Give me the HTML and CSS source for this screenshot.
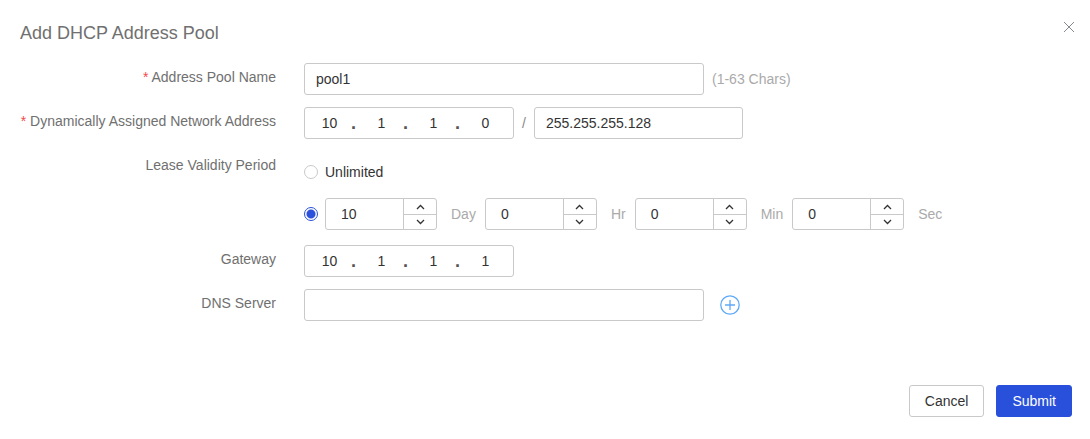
FILE: index.html
```html
<!DOCTYPE html>
<html lang="en">
<head>
    <meta charset="UTF-8">
    <meta name="viewport" content="width=device-width, initial-scale=1.0">
    <title>Add DHCP Address Pool</title>
    <link rel="stylesheet" href="styles.css">
</head>
<body>
    <form class="dialog">
        <div class="dialog-header">
            <h1>Add DHCP Address Pool</h1>
            <button type="button" class="close" aria-label="Close">
                <svg width="12" height="12" viewBox="0 0 12 12"><path d="M1 1l10 10M11 1L1 11"/></svg>
            </button>
        </div>

        <div class="row">
            <label class="row-label" for="pool-name"><span class="required">*</span> Address Pool Name</label>
            <div class="field">
                <input type="text" id="pool-name" class="text-input" value="pool1">
                <span class="hint">(1-63 Chars)</span>
            </div>
        </div>

        <div class="row">
            <label class="row-label" for="network-1"><span class="required">*</span> Dynamically Assigned Network Address</label>
            <div class="field">
                <div class="ip-input">
                    <input type="text" id="network-1" value="10"><span class="dot">.</span>
                    <input type="text" aria-label="Network octet 2" value="1"><span class="dot">.</span>
                    <input type="text" aria-label="Network octet 3" value="1"><span class="dot">.</span>
                    <input type="text" aria-label="Network octet 4" value="0">
                </div>
                <span class="slash">/</span>
                <input type="text" class="text-input mask" aria-label="Subnet mask" value="255.255.255.128">
            </div>
        </div>

        <div class="row lease">
            <span class="row-label" id="lease-label">Lease Validity Period</span>
            <div class="lease-options" role="radiogroup" aria-labelledby="lease-label">
                <div class="option">
                    <input type="radio" name="lease" id="lease-unlimited">
                    <label for="lease-unlimited">Unlimited</label>
                </div>
                <div class="option">
                    <input type="radio" name="lease" aria-label="Limited" checked>
                    <div class="stepper">
                        <input type="number" id="lease-day" value="10">
                        <button type="button" aria-label="More days"><svg width="9" height="6" viewBox="0 0 9 6"><path d="M1 5l3.5-3.5L8 5"/></svg></button>
                        <button type="button" aria-label="Fewer days"><svg width="9" height="6" viewBox="0 0 9 6"><path d="M1 1l3.5 3.5L8 1"/></svg></button>
                    </div>
                    <label class="unit" for="lease-day">Day</label>
                    <div class="stepper">
                        <input type="number" id="lease-hr" value="0">
                        <button type="button" aria-label="More hours"><svg width="9" height="6" viewBox="0 0 9 6"><path d="M1 5l3.5-3.5L8 5"/></svg></button>
                        <button type="button" aria-label="Fewer hours"><svg width="9" height="6" viewBox="0 0 9 6"><path d="M1 1l3.5 3.5L8 1"/></svg></button>
                    </div>
                    <label class="unit" for="lease-hr">Hr</label>
                    <div class="stepper">
                        <input type="number" id="lease-min" value="0">
                        <button type="button" aria-label="More minutes"><svg width="9" height="6" viewBox="0 0 9 6"><path d="M1 5l3.5-3.5L8 5"/></svg></button>
                        <button type="button" aria-label="Fewer minutes"><svg width="9" height="6" viewBox="0 0 9 6"><path d="M1 1l3.5 3.5L8 1"/></svg></button>
                    </div>
                    <label class="unit" for="lease-min">Min</label>
                    <div class="stepper">
                        <input type="number" id="lease-sec" value="0">
                        <button type="button" aria-label="More seconds"><svg width="9" height="6" viewBox="0 0 9 6"><path d="M1 5l3.5-3.5L8 5"/></svg></button>
                        <button type="button" aria-label="Fewer seconds"><svg width="9" height="6" viewBox="0 0 9 6"><path d="M1 1l3.5 3.5L8 1"/></svg></button>
                    </div>
                    <label class="unit" for="lease-sec">Sec</label>
                </div>
            </div>
        </div>

        <div class="row">
            <label class="row-label" for="gateway-1">Gateway</label>
            <div class="field">
                <div class="ip-input">
                    <input type="text" id="gateway-1" value="10"><span class="dot">.</span>
                    <input type="text" aria-label="Gateway octet 2" value="1"><span class="dot">.</span>
                    <input type="text" aria-label="Gateway octet 3" value="1"><span class="dot">.</span>
                    <input type="text" aria-label="Gateway octet 4" value="1">
                </div>
            </div>
        </div>

        <div class="row">
            <label class="row-label" for="dns">DNS Server</label>
            <div class="field">
                <input type="text" id="dns" class="text-input">
                <button type="button" class="add" aria-label="Add DNS server">
                    <svg width="20" height="20" viewBox="0 0 20 20"><circle cx="10" cy="10" r="9.2"/><path d="M10 5v10M5 10h10"/></svg>
                </button>
            </div>
        </div>

        <div class="dialog-footer">
            <button type="button" class="btn">Cancel</button>
            <button type="submit" class="btn primary">Submit</button>
        </div>
    </form>
</body>
</html>
```
FILE: styles.css
```css
* {
    box-sizing: border-box;
}
body {
    margin: 0;
    background-color: #fff;
    color: #333;
    font-family: Arial, "Liberation Sans", sans-serif;
    font-size: 14px;
}
input, button {
    margin: 0;
    padding: 0;
    font: inherit;
    color: inherit;
}
button {
    border: none;
    background: none;
    cursor: pointer;
}
svg {
    display: block;
    fill: none;
    stroke: currentColor;
}
.dialog {
    padding: 17px 18px 22px 20px;
}
.dialog-header {
    display: flex;
    justify-content: space-between;
    align-items: flex-start;
    height: 46px;
}
h1 {
    margin: 0;
    font-size: 18px;
    font-weight: normal;
    line-height: 32px;
    color: #707070;
}
.close {
    padding: 4px 0;
    margin-right: -3px;
    color: #85888f;
}
.row {
    display: grid;
    grid-template-columns: 256px 1fr;
    column-gap: 28px;
    margin-bottom: 12px;
}
.row-label {
    line-height: 28px;
    text-align: right;
    white-space: nowrap;
    color: #707070;
}
.required {
    color: #f5484a;
}
.field {
    display: flex;
    align-items: center;
}
.text-input, .ip-input, .stepper {
    height: 32px;
    border: 1px solid #c9c9c9;
    border-radius: 3px;
    background-color: #fff;
}
.text-input {
    width: 400px;
    padding: 0 11px;
}
.text-input.mask {
    width: 209px;
}
.hint {
    margin-left: 8px;
    color: #aaa;
}
.slash {
    width: 20px;
    text-align: center;
    color: #888;
}
.ip-input {
    display: flex;
    align-items: center;
    width: 210px;
    padding-left: 3px;
}
.ip-input input {
    width: 43px;
    border: none;
    text-align: center;
    background: none;
}
.dot {
    width: 5px;
    margin-right: 4px;
    font-size: 18px;
    font-weight: bold;
    color: #555;
}

/* lease period */
.lease-options {
    display: grid;
    row-gap: 10px;
    padding: 5px 0 3px;
}
.option {
    display: flex;
    align-items: center;
    line-height: 32px;
}
.option input[type="radio"] {
    appearance: none;
    width: 14px;
    height: 14px;
    margin-right: 7px;
    border: 1px solid #c9c9c9;
    border-radius: 50%;
}
.option input[type="radio"]:checked {
    border-color: #2b50dc;
    background: radial-gradient(circle, #2b50dc 4px, #fff 5px);
}
.stepper {
    display: grid;
    grid-template-columns: 1fr 33px;
    grid-template-rows: 1fr 1fr;
    width: 112px;
}
.stepper input {
    grid-row: 1 / 3;
    width: 100%;
    padding-left: 15px;
    border: none;
    background: none;
    appearance: textfield;
}
.stepper input::-webkit-inner-spin-button {
    appearance: none;
}
.stepper button {
    display: flex;
    align-items: center;
    justify-content: center;
    border-left: 1px solid #c9c9c9;
}
.stepper button:last-child {
    grid-column: 2;
    border-top: 1px solid #c9c9c9;
}
.stepper svg {
    stroke-width: 1.3;
}
.unit {
    margin: 0 9px 0 14px;
    color: #aaa;
}
.add {
    margin-left: 16px;
    color: #5ea9f7;
}
.add svg {
    stroke-width: 1.3;
}

.dialog-footer {
    display: flex;
    justify-content: flex-end;
    gap: 12px;
    margin-top: 64px;
}
.btn {
    height: 32px;
    padding: 0 15px;
    border: 1px solid #c9c9c9;
    border-radius: 3px;
}
.btn.primary {
    border-color: #2950da;
    background-color: #2950da;
    color: #fff;
}
```
